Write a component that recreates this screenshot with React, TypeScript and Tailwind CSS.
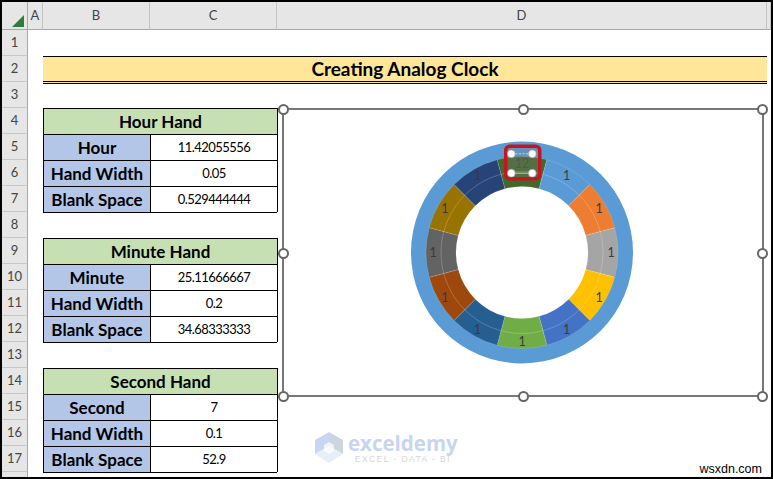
import React from 'react';

type Row =
  | { kind: 'blank'; closes?: boolean }
  | { kind: 'title' }
  | { kind: 'head'; label: string }
  | { kind: 'value'; label: string; value: string };

const ROWS: Row[] = [
  { kind: 'blank' },
  { kind: 'title' },
  { kind: 'blank' },
  { kind: 'head', label: 'Hour Hand' },
  { kind: 'value', label: 'Hour', value: '11.42055556' },
  { kind: 'value', label: 'Hand Width', value: '0.05' },
  { kind: 'value', label: 'Blank Space', value: '0.529444444' },
  { kind: 'blank', closes: true },
  { kind: 'head', label: 'Minute Hand' },
  { kind: 'value', label: 'Minute', value: '25.11666667' },
  { kind: 'value', label: 'Hand Width', value: '0.2' },
  { kind: 'value', label: 'Blank Space', value: '34.68333333' },
  { kind: 'blank', closes: true },
  { kind: 'head', label: 'Second Hand' },
  { kind: 'value', label: 'Second', value: '7' },
  { kind: 'value', label: 'Hand Width', value: '0.1' },
  { kind: 'value', label: 'Blank Space', value: '52.9' },
  { kind: 'blank', closes: true },
];

const SEGMENTS = [
  '#43682b', '#5b9bd5', '#ed7d31', '#a5a5a5', '#ffc000', '#4472c4',
  '#70ad47', '#255e91', '#9e480e', '#636363', '#997300', '#264478',
];

const CX = 119;
const CY = 119.5;

function polar(r: number, deg: number) {
  const a = ((deg - 90) * Math.PI) / 180;
  return [CX + r * Math.cos(a), CY + r * Math.sin(a)];
}

function wedge(r0: number, r1: number, from: number, to: number) {
  const [ax, ay] = polar(r1, from);
  const [bx, by] = polar(r1, to);
  const [cx, cy] = polar(r0, to);
  const [dx, dy] = polar(r0, from);
  return `M${ax} ${ay}A${r1} ${r1} 0 0 1 ${bx} ${by}L${cx} ${cy}A${r0} ${r0} 0 0 0 ${dx} ${dy}Z`;
}

function Doughnut() {
  return (
    <svg width="240" height="240" viewBox="0 0 240 240">
      <path d={`${wedge(95, 111, 0, 180)}${wedge(95, 111, 180, 360)}`} fill="#5b9bd5" />
      {SEGMENTS.map((color, i) => (
        <path
          key={i}
          d={wedge(66, 96, i * 30 - 15, i * 30 + 15)}
          fill={color}
          stroke="#ffffff"
          strokeOpacity="0.25"
          strokeWidth="0.5"
        />
      ))}
      <circle cx={CX} cy={CY} r="81" fill="none" stroke="#ffffff" strokeOpacity="0.35" strokeWidth="0.6" />
      {SEGMENTS.map((_, i) => {
        const [x, y] = polar(89, i * 30);
        return (
          <text
            key={i}
            x={x}
            y={y + 4.5}
            textAnchor="middle"
            fontSize="12.5"
            fill="#3b3b3b"
            fillOpacity={i === 0 ? 0.75 : 1}
            fontFamily="Lato, sans-serif"
          >
            {i === 0 ? '12' : '1'}
          </text>
        );
      })}
      {/* selected data point */}
      <rect x="104" y="14" width="32" height="31" fill="#808080" fillOpacity="0.3" />
      <path d="M109 20.8H129" stroke="#ffffff" strokeOpacity="0.8" strokeWidth="0.8" strokeDasharray="2 1.5" />
      <path d="M109 40.2H129" stroke="#ffffff" strokeOpacity="0.8" strokeWidth="0.8" />
      <rect x="102.75" y="13.25" width="34" height="32.5" rx="4" fill="none" stroke="#c5161f" strokeWidth="3.5" />
      {[[108.3, 20.8], [129.3, 20.8], [108.3, 40.2], [129.3, 40.2]].map(([x, y]) => (
        <circle key={`${x}-${y}`} cx={x} cy={y} r="3.9" fill="#ffffff" stroke="#9a9a9a" strokeWidth="0.6" />
      ))}
    </svg>
  );
}

function Handle() {
  return <div className="h-[11px] w-[11px] rounded-full border-2 border-[#666666] bg-white" />;
}

function Watermark() {
  return (
    <div className="absolute left-[313px] top-[430px] flex items-start gap-[5px] select-none">
      <svg width="28" height="31" viewBox="0 0 28 31">
        <path d="M14 0L0 8V22L14 14Z" fill="#c9d6f3" />
        <path d="M14 0L28 8V22L14 14Z" fill="#cdd5de" />
        <path d="M0 22L14 14L28 22L14 31Z" fill="#e8eef8" />
        <path d="M14 10L19 13V19L14 22L9 19V13Z" fill="#ffffff" fillOpacity="0.7" />
      </svg>
      <div className="flex flex-col items-center">
        <span className="font-['Open_Sans',sans-serif] text-[20.5px] font-bold leading-[22px] text-[#c8d5f2]">exceldemy</span>
        <span className="font-['Liberation_Sans',sans-serif] text-[8.5px] leading-[10px] tracking-[0.17em] text-[#d6d6d6]">EXCEL - DATA - BI</span>
      </div>
    </div>
  );
}

export default function App() {
  return (
    <div className="relative h-[479px] w-[773px] overflow-hidden border-2 border-black bg-white font-['Lato',sans-serif] text-black">
      <div className="grid grid-cols-[26px_15px_107px_127px_490px_4px] grid-rows-[28px] auto-rows-[26px]">
        {/* Column headers */}
        <div className="flex items-end justify-end border-b border-r border-[#a8a8a8] bg-[#e6e6e6] pb-[2px] pr-[3px]">
          <svg width="12" height="12" viewBox="0 0 12 12">
            <path d="M0 12L12 0V12Z" fill="#2f7d3c" />
          </svg>
        </div>
        {['A', 'B', 'C', 'D', ''].map((col) => (
          <div
            key={col}
            className="flex items-center justify-center border-b border-r border-b-[#a8a8a8] border-r-[#c4c4c4] bg-[#e6e6e6] text-[13px] text-[#444444]"
          >
            {col}
          </div>
        ))}

        {ROWS.map((row, i) => {
          const n = i + 1;
          const header = (
            <div className="flex items-center justify-center border-b border-r border-b-[#c8c8c8] border-r-[#a8a8a8] bg-[#e6e6e6] text-[13px] text-[#444444]">
              {n < ROWS.length ? n : ''}
            </div>
          );
          if (row.kind === 'title') {
            return (
              <React.Fragment key={n}>
                {header}
                <div />
                <div className="col-span-3 flex h-[28px] items-center justify-center border-b-[3px] border-t border-b-black border-t-black bg-[#ffe699] [border-bottom-style:double] text-[19px] font-bold">
                  Creating Analog Clock
                </div>
                <div />
              </React.Fragment>
            );
          }
          if (row.kind === 'head') {
            return (
              <React.Fragment key={n}>
                {header}
                <div />
                <div className="col-span-2 flex items-center justify-center border-l border-t border-black bg-[#c6e0b4] text-[17px] font-bold">
                  {row.label}
                </div>
                <div className="border-l border-black" />
                <div />
              </React.Fragment>
            );
          }
          if (row.kind === 'value') {
            return (
              <React.Fragment key={n}>
                {header}
                <div />
                <div className="flex items-center justify-center border-l border-t border-black bg-[#b4c6e7] text-[17px] font-bold">
                  {row.label}
                </div>
                <div className="flex items-center justify-center border-l border-t border-black text-[13px] tracking-[-0.04em]">
                  {row.value}
                </div>
                <div className="border-l border-black" />
                <div />
              </React.Fragment>
            );
          }
          return (
            <React.Fragment key={n}>
              {header}
              <div />
              <div className={row.closes ? 'h-px bg-black' : ''} />
              <div className={row.closes ? 'h-px bg-black' : ''} />
              <div />
              <div />
            </React.Fragment>
          );
        })}
      </div>

      {/* Chart object sits over the cells */}
      <div className="absolute left-[280px] top-[106px] flex h-[289px] w-[482px] items-center justify-center border-2 border-[#777777] bg-white">
        <Doughnut />
        <div className="absolute -left-[6px] -right-[6px] -bottom-[7px] -top-[6px] flex flex-col justify-between">
          {[0, 1, 2].map((r) => (
            <div key={r} className="flex justify-between">
              <Handle />
              {r === 1 ? null : <Handle />}
              <Handle />
            </div>
          ))}
        </div>
      </div>

      <Watermark />
      <div className="absolute bottom-px right-[9px] font-['Liberation_Sans',sans-serif] text-[12.5px] leading-[14px] text-black">
        wsxdn.com
      </div>
    </div>
  );
}
